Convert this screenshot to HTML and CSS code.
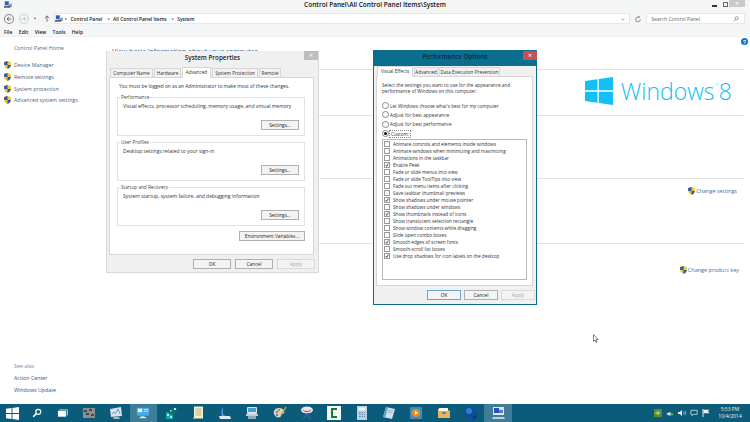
FILE: index.html
```html
<!DOCTYPE html>
<html lang="en">
<head>
<meta charset="utf-8">
<title>System</title>
<link rel="stylesheet" href="styles.css">
</head>
<body>
<svg class="defs" width="0" height="0" aria-hidden="true">
  <symbol id="shield" viewBox="0 0 10 12">
    <path d="M5 0 10 1.5V6c0 3-2.5 5-5 6-2.500-1-5-3-5-6V1.500z" fill="#f3c62e"/>
    <path d="M5 0 0 1.500V6h5zM5 6v6c2.500-1 5-3 5-6z" fill="#2c5aa8"/>
  </symbol>
  <symbol id="tick" viewBox="0 0 6 6">
    <path d="M1 3 2.500 5 5 .8" fill="none" stroke="#222" stroke-width="1.200"/>
  </symbol>
</svg>

<div class="window">
  <header class="titlebar">
    <svg class="app-icon" viewBox="0 0 10 8"><rect x="1" width="5" height="5" fill="#2b62b5"/><rect x="5" y="3" width="5" height="4" fill="#8aa0c8"/><rect y="6" width="8" height="2" fill="#555"/></svg>
    <h1 class="title">Control Panel\All Control Panel Items\System</h1>
    <div class="winctl">
      <span class="min"></span>
      <span class="restore"></span>
      <span class="close">×</span>
    </div>
  </header>
  <nav class="navbar">
    <span class="circle"><svg viewBox="0 0 10 10"><path d="M8 5H2.500M5 2.500 2.500 5 5 7.500" fill="none" stroke="#555" stroke-width="1"/></svg></span>
    <span class="circle dim"><svg viewBox="0 0 10 10"><path d="M2 5h5.500M5 2.500 7.500 5 5 7.500" fill="none" stroke="#bbb" stroke-width="1"/></svg></span>
    <svg class="caret" viewBox="0 0 6 4"><path d="M1 1 3 3 5 1z" fill="#666"/></svg>
    <svg class="up" viewBox="0 0 8 9"><path d="M4 9V1M1 4 4 1l3 3" fill="none" stroke="#555" stroke-width="1"/></svg>
    <div class="address">
      <svg class="crumb-icon" viewBox="0 0 10 8"><rect x="1" width="5" height="5" fill="#2b62b5"/><rect x="5" y="3" width="5" height="4" fill="#8aa0c8"/><rect y="6" width="8" height="2" fill="#555"/></svg>
      <span class="sep">▸</span><span class="crumb">Control Panel</span>
      <span class="sep">▸</span><span class="crumb">All Control Panel Items</span>
      <span class="sep">▸</span><span class="crumb">System</span>
      <svg class="addr-caret" viewBox="0 0 6 4"><path d="M.5.500 3 3 5.500.500" fill="none" stroke="#555" stroke-width=".8"/></svg>
    </div>
    <svg class="refresh" viewBox="0 0 10 10"><path d="M8 5.500A3 3 0 1 1 5 2.500h1.500M5.500 1 7 2.500 5.500 4" fill="none" stroke="#666" stroke-width=".9"/></svg>
    <div class="search"><span>Search Control Panel</span>
      <svg class="lens" viewBox="0 0 8 8"><circle cx="5" cy="3" r="2" fill="none" stroke="#666" stroke-width=".8"/><path d="M3.500 4.500 1 7" stroke="#666" stroke-width=".9"/></svg>
    </div>
  </nav>
  <div class="menubar"><span>File</span><span>Edit</span><span>View</span><span>Tools</span><span>Help</span></div>

  <div class="body">
    <aside class="sidebar">
      <a class="home">Control Panel Home</a>
      <ul class="tasks">
        <li><svg class="shield"><use href="#shield"/></svg>Device Manager</li>
        <li><svg class="shield"><use href="#shield"/></svg>Remote settings</li>
        <li><svg class="shield"><use href="#shield"/></svg>System protection</li>
        <li><svg class="shield"><use href="#shield"/></svg>Advanced system settings</li>
      </ul>
      <div class="seealso">
        <p class="seehead">See also</p>
        <a>Action Center</a>
        <a>Windows Update</a>
      </div>
    </aside>
    <main class="main">
      <svg class="help" viewBox="0 0 10 10"><circle cx="5" cy="5" r="5" fill="#1a6fc4"/><text x="5" y="8" font-size="8" font-weight="700" text-anchor="middle" fill="#fff" font-family="Liberation Sans">?</text></svg>
      <h2 class="heading">View basic information about your computer</h2>
      <section class="sec sec-edition">
        <div class="brand">
          <svg class="flag" viewBox="0 0 28 28"><path d="M0 4 12.500 2.200V13.300H0zM13.800 2 28 0V13.300H13.800zM0 14.700H12.500V25.800L0 24zM13.800 14.700H28V28L13.800 26z" fill="#12c0f6"/></svg>
          <span class="wordmark">Windows<sup>®</sup><span class="eight">8</span></span>
        </div>
      </section>
      <section class="sec sec-system"></section>
      <section class="sec sec-name"><a class="change"><svg class="shield"><use href="#shield"/></svg>Change settings</a></section>
      <section class="sec sec-act"><a class="change"><svg class="shield"><use href="#shield"/></svg>Change product key</a></section>
    </main>
  </div>

  <footer class="taskbar">
    <span class="slot s-start"><svg viewBox="0 0 14 14"><path d="M0 2 6 1.100V6.500H0zM7 1 14 0V6.500H7zM0 7.500H6V12.900L0 12zM7 7.500H14V14L7 13z" fill="#fff"/></svg></span>
    <span class="slot s-search"><svg viewBox="0 0 12 12"><circle cx="7.500" cy="4.500" r="3" fill="none" stroke="#fff" stroke-width="1.500"/><path d="M5.300 6.700 1.500 10.500" stroke="#fff" stroke-width="2"/></svg></span>
    <span class="slot s-tasks"><svg viewBox="0 0 12 12"><rect x="1" y="3" width="9" height="6.500" fill="#fff"/><path d="M2.500 2H11.500V8" fill="none" stroke="#cfe" stroke-width=".8"/></svg></span>
    <span class="slot"><svg viewBox="0 0 14 14"><rect x="1" y="2" width="12" height="10" fill="#8a8f8c"/><path d="M2 4h3v2H2zM7 3h3v2H7zM4 7h3v2H4zM9 8h3v2H9z" fill="#3c4a4c"/></svg></span>
    <span class="slot"><svg viewBox="0 0 14 14"><path d="M1 3 12 1 13 10 2 11z" fill="#d8e2ea"/><path d="M3 8 5 6l1.500 1.500L9 3l2 5" fill="none" stroke="#4a88c0" stroke-width=".8"/><path d="M5 11h5l1 2H4z" fill="#aab4bc"/></svg></span>
    <span class="slot active"><svg viewBox="0 0 16 14"><rect x="1" y="1" width="14" height="9" fill="#49a9ea"/><rect x="2" y="2" width="5" height="4" fill="#e8f4fc"/><path d="M9 3h5M9 5h5" stroke="#d5ecfb"/><path d="M4 13c1-3 6-3 8 0z" fill="#dfe6ea"/></svg></span>
    <span class="slot"><svg viewBox="0 0 14 14"><path d="M2 6h7v7H2z" fill="#18a8a0"/><path d="M4 7 9 2h4v3l-4 4z" fill="#0c6f70"/><path d="M10 2h2v2h-2zM6 4h1.500v1.500H6zM3 8h2v2H3zM6 10h2v2H6z" fill="#9ef0e4"/></svg></span>
    <span class="slot"><svg viewBox="0 0 12 14"><path d="M2 .500H11V12.500H1L2 11z" fill="#f6eec4"/><path d="M3.500 3h6M3.500 5h6M3.500 7h6M3.500 9h6" stroke="#a89c70" stroke-width=".7"/></svg></span>
    <span class="slot"><svg viewBox="0 0 14 14"><path d="M5 1C3 4 3 8 4 11L10 12 5 8z" fill="#5d8fe0"/><path d="M1 10 12 10 13 13H2z" fill="#dfe8f2"/></svg></span>
    <span class="slot"><svg viewBox="0 0 14 14"><rect x="2" y="1" width="10" height="7" rx="1" fill="#dfe8ee"/><rect x="3" y="2" width="8" height="4" fill="#4f9bd6"/><rect x="1" y="8" width="12" height="2" fill="#c2ced6"/><rect x="3" y="10" width="8" height="3" fill="#8fa9b8"/></svg></span>
    <span class="slot"><svg viewBox="0 0 14 14"><path d="M6 2C2 2 0 5 1 8s4 4 6 3 0-2 2-3 3-1 2-3-2-3-5-3z" fill="#d9d3c0"/><circle cx="4" cy="6" r="1" fill="#d33"/><circle cx="6" cy="4" r="1" fill="#3a3"/><circle cx="4" cy="9" r="1" fill="#36c"/><path d="M8 9 13 1" stroke="#e8a030" stroke-width="1.400"/></svg></span>
    <span class="slot"><svg viewBox="0 0 14 14"><ellipse cx="7" cy="4" rx="6" ry="3.500" fill="#e8e8ea"/><path d="M3 4c2 2 6 2 8 0" fill="none" stroke="#c23a4a" stroke-width="1"/><path d="M5 7 11 13M9 7 3 13" stroke="#3b62a8" stroke-width="1.200"/></svg></span>
    <span class="slot"><svg viewBox="0 0 14 14"><rect width="14" height="14" fill="#f4f6f2"/><path d="M10 3H5V11H10" fill="none" stroke="#117a3c" stroke-width="2"/></svg></span>
    <span class="slot"><svg viewBox="0 0 12 14"><rect x="1" width="10" height="14" fill="#b9cfe2"/><rect x="2.500" y="1.500" width="7" height="3" fill="#eef5fb"/><path d="M3 6.500h6M3 8.500h6M3 10.500h6" stroke="#5f8cb0" stroke-dasharray="1.500 1" stroke-width="1.200"/></svg></span>
    <span class="slot"><svg viewBox="0 0 14 14"><path d="M4 1 13 3 10 13 1 11z" fill="#cfe0ea"/><path d="M4 1 1 11 3 11.500 6 1.500z" fill="#5fa0c0"/><path d="M6 4l5 1M5.500 6l5 1" stroke="#8ab" stroke-width=".7"/></svg></span>
    <span class="slot"><svg viewBox="0 0 14 14"><rect x="1" y="1" width="12" height="12" rx="1" fill="#3e8ec6"/><circle cx="7" cy="7" r="4" fill="#f08a1c"/><path d="M6 5 9 7 6 9z" fill="#fff"/></svg></span>
    <span class="slot"><svg viewBox="0 0 14 14"><path d="M1 3H5L6 4.500H13V12H1z" fill="#f0cf80"/><rect x="2" y="2" width="9" height="3" fill="#f6f4ea"/><rect x="1" y="5" width="12" height="7" fill="#e7b45a"/><rect x="5.500" y="6" width="3" height="2" fill="#3d7eae"/></svg></span>
    <span class="slot"><svg viewBox="0 0 14 14"><circle cx="7" cy="7" r="7" fill="#0f4f9a"/><circle cx="5" cy="5" r="3" fill="#2f7fd0"/><path d="M9 10a4 4 0 0 0 4-3 7 7 0 0 1-4 7z" fill="#093a70"/></svg></span>
    <span class="slot active"><svg viewBox="0 0 14 14"><rect x="2" y="1" width="11" height="8" fill="#dfe6ea"/><rect x="3" y="2" width="5" height="5" fill="#2253c8"/><rect x="8" y="4" width="4" height="3" fill="#5a78c0"/><path d="M2 11h11l1 2H1z" fill="#c8d0d6"/></svg></span>
    <div class="tray">
      <svg class="t-green" viewBox="0 0 8 8"><rect width="8" height="8" fill="#5d8a34"/><path d="M1.500 4h3M3.500 2l2 2-2 2" fill="none" stroke="#ddf0b0"/></svg>
      <svg class="t-net" viewBox="0 0 9 8"><path d="M0 5 4 3l4 2-4 2z" fill="#cfd8dc"/><circle cx="6.500" cy="5.500" r="1.500" fill="#5aa83c"/></svg>
      <svg class="t-sound" viewBox="0 0 9 8"><path d="M0 3H2L4.500 .5V7.500L2 5H0z" fill="#eee"/><path d="M6 2.500c1 1 1 2 0 3M7.500 1.500c1.500 1.500 1.500 3.500 0 5" fill="none" stroke="#dde" stroke-width=".7"/></svg>
      <svg class="t-msg" viewBox="0 0 9 8"><path d="M1 1H8V5.500H3.500L2 7V5.500H1z" fill="none" stroke="#eee" stroke-width=".8"/></svg>
      <svg class="t-flag" viewBox="0 0 8 8"><path d="M1 0V8" stroke="#eee"/><path d="M1.500 .8H7.500L6 2.500 7.500 4.200H1.500z" fill="#eee"/></svg>
      <div class="clock"><span>5:53 PM</span><span>10/4/2014</span></div>
    </div>
  </footer>
</div>

<section class="dialog sysprop">
  <header class="dlg-title"><h3>System Properties</h3><span class="dlg-close">×</span></header>
  <div class="tabs">
    <span class="tab w-cn">Computer Name</span>
    <span class="tab w-hw">Hardware</span>
    <span class="tab on w-ad">Advanced</span>
    <span class="tab w-sp">System Protection</span>
    <span class="tab w-rm">Remote</span>
  </div>
  <div class="panel">
    <p class="notice">You must be logged on as an Administrator to make most of these changes.</p>
    <fieldset class="group">
      <legend>Performance</legend>
      <p>Visual effects, processor scheduling, memory usage, and virtual memory</p>
      <button class="btn settings">Settings...</button>
    </fieldset>
    <fieldset class="group">
      <legend>User Profiles</legend>
      <p>Desktop settings related to your sign-in</p>
      <button class="btn settings">Settings...</button>
    </fieldset>
    <fieldset class="group">
      <legend>Startup and Recovery</legend>
      <p>System startup, system failure, and debugging information</p>
      <button class="btn settings">Settings...</button>
    </fieldset>
    <button class="btn env">Environment Variables...</button>
  </div>
  <div class="dlg-actions">
    <button class="btn act">OK</button>
    <button class="btn act">Cancel</button>
    <button class="btn act off">Apply</button>
  </div>
</section>

<section class="dialog perf">
  <header class="dlg-title"><h3>Performance Options</h3><span class="dlg-close">×</span></header>
  <div class="tabs">
    <span class="tab on p-ve">Visual Effects</span>
    <span class="tab p-ad">Advanced</span>
    <span class="tab p-de">Data Execution Prevention</span>
  </div>
  <div class="panel">
    <p class="intro">Select the settings you want to use for the appearance and performance of Windows on this computer.</p>
    <ul class="radios">
      <li><i class="radio"></i>Let Windows choose what's best for my computer</li>
      <li><i class="radio"></i>Adjust for best appearance</li>
      <li><i class="radio"></i>Adjust for best performance</li>
      <li><i class="radio sel"></i><span class="focus">Custom:</span></li>
    </ul>
    <ul class="effects">
      <li><i class="check"></i>Animate controls and elements inside windows</li>
      <li><i class="check"></i>Animate windows when minimizing and maximizing</li>
      <li><i class="check"></i>Animations in the taskbar</li>
      <li><i class="check"><svg><use href="#tick"/></svg></i>Enable Peek</li>
      <li><i class="check"></i>Fade or slide menus into view</li>
      <li><i class="check"></i>Fade or slide ToolTips into view</li>
      <li><i class="check"></i>Fade out menu items after clicking</li>
      <li><i class="check"></i>Save taskbar thumbnail previews</li>
      <li><i class="check"><svg><use href="#tick"/></svg></i>Show shadows under mouse pointer</li>
      <li><i class="check"></i>Show shadows under windows</li>
      <li><i class="check"><svg><use href="#tick"/></svg></i>Show thumbnails instead of icons</li>
      <li><i class="check"></i>Show translucent selection rectangle</li>
      <li><i class="check"></i>Show window contents while dragging</li>
      <li><i class="check"></i>Slide open combo boxes</li>
      <li><i class="check"><svg><use href="#tick"/></svg></i>Smooth edges of screen fonts</li>
      <li><i class="check"></i>Smooth-scroll list boxes</li>
      <li><i class="check"><svg><use href="#tick"/></svg></i>Use drop shadows for icon labels on the desktop</li>
    </ul>
  </div>
  <div class="dlg-actions">
    <button class="btn act def">OK</button>
    <button class="btn act">Cancel</button>
    <button class="btn act off">Apply</button>
  </div>
</section>

<svg class="cursor" viewBox="0 0 6 9"><path d="M.5.500V7.500L2 6l1 2.500 1-.5L3 5.500H5.200z" fill="#fff" stroke="#333" stroke-width=".6"/></svg>
</body>
</html>
```
FILE: styles.css
```css
* { box-sizing: border-box; }
html, body { margin: 0; padding: 0; }
body {
  width: 750px;
  height: 422px;
  overflow: hidden;
  position: relative;
  font-family: "Open Sans", "Liberation Sans", sans-serif;
  font-size: 5px;
  color: #444;
  background: #fff;
}
.defs { position: absolute; }
p, h1, h2, h3, ul { margin: 0; padding: 0; font-weight: 400; }
ul { list-style: none; }
svg { display: block; flex: none; }

.window { display: flex; flex-direction: column; height: 422px; }

.titlebar { height: 13px; background: #f4f5f5; position: relative; display: flex; align-items: flex-start; padding: 1px 0 0 4px; }
.app-icon { width: 8px; height: 7px; }
.title { flex: 1; text-align: center; font-size: 6.500px; font-weight: 600; color: #111; line-height: 8px; margin-left: -12px; }
.winctl { position: absolute; right: 5px; top: 0; display: flex; align-items: flex-start; }
.min { width: 5px; height: 2px; background: #333; margin: 5px 6px 0 0; }
.restore { width: 5px; height: 5px; border: 1px solid #666; margin: 2px 1px 0 0; }
.close { width: 16px; height: 7px; background: #c9c9c9; color: #fff; font-size: 7px; line-height: 7px; text-align: center; }

.navbar { height: 14px; background: #f4f5f5; display: flex; align-items: center; padding: 0 5px 3px 4px; }
.circle { width: 10px; height: 10px; border: 1px solid #888; border-radius: 50%; margin-right: 5px; display: block; }
.circle.dim { border-color: #ccc; margin-right: 3px; }
.caret { width: 4px; height: 3px; margin: 0 7px 0 1px; }
.up { width: 6px; height: 7px; margin-right: 4px; }
.address { width: 578px; height: 11px; background: #fff; border: 1px solid #e8e8e8; display: flex; align-items: center; padding-left: 0; position: relative; font-weight: 600; color: #222; font-size: 4.900px; }
.crumb-icon { width: 8px; height: 7px; margin-right: 1px; }
.sep { font-size: 4px; color: #666; margin: 0 3px 0 1.500px; font-weight: 400; }
.sep + .crumb { margin-right: 4px; }
.addr-caret { width: 4px; height: 3px; position: absolute; right: 4px; top: 4px; }
.refresh { width: 8px; height: 8px; margin: 0 4px; }
.search { width: 99px; height: 11px; background: #fff; border: 1px solid #e8e8e8; display: flex; justify-content: space-between; align-items: center; padding: 0 5px 0 4px; font-size: 5px; color: #666; }
.lens { width: 6px; height: 6px; }

.menubar { height: 10px; background: #f5f6f7; display: flex; gap: 6.500px; align-items: center; padding-left: 4px; font-weight: 600; font-size: 5px; color: #222; border-bottom: 1px solid #f0f0f0; }

.body { flex: 1; display: flex; background: #fff; min-height: 0; }
.sidebar { width: 107px; padding: 7px 0 0 14px; display: flex; flex-direction: column; color: #55606a; font-size: 5.300px; }
.home { line-height: 8px; color: #5a6a80; }
.tasks { margin-top: 9px; margin-left: -10px; display: flex; flex-direction: column; gap: 3.800px; }
.tasks li { display: flex; align-items: center; gap: 3px; height: 8px; color: #4a5f80; }
.shield { width: 7px; height: 8px; }
.seealso { margin-top: auto; padding-bottom: 10px; display: flex; flex-direction: column; gap: 4px; line-height: 8px; color: #33508a; }
.seehead { color: #888; }

.main { flex: 1; position: relative; padding-right: 6px; display: flex; flex-direction: column; }
.help { position: absolute; right: 2px; top: 1px; width: 7px; height: 7px; }
.heading { padding: 10px 0 0 5px; font-size: 7px; color: #2a6a9a; line-height: 10px; height: 32px; }
.sec { border-top: 1px solid #e2e2e2; position: relative; }
.sec-edition { height: 46px; }
.sec-system { height: 63px; }
.sec-name { height: 65px; }
.sec-act { flex: 1; }
.brand { display: flex; align-items: center; justify-content: flex-end; gap: 8px; padding: 7px 12px 0 0; color: #12bdf3; }
.flag { width: 28px; height: 28px; }
.wordmark { font-size: 23px; font-weight: 300; line-height: 28px; white-space: nowrap; display: flex; align-items: flex-start; }
.wordmark sup { font-size: 4px; line-height: 16px; margin: 0 0 0 1px; }
.change { display: flex; align-items: center; justify-content: flex-end; gap: 1px; color: #3c6ea8; font-size: 5.500px; padding-right: 7px; }
.sec-name .change { padding-top: 8px; }
.sec-act .change { padding-top: 22px; padding-right: 5px; }

.taskbar { height: 18px; background: #0a5c7a; display: flex; align-items: center; }
.slot { width: 27.300px; height: 18px; display: flex; align-items: center; justify-content: center; }
.slot svg { width: 14px; height: 14px; }
.slot.active { background: #3f7d96; }
.s-start { width: 24px; }
.s-start svg { width: 13px; height: 13px; }
.s-search { width: 26px; }
.s-search svg { width: 10px; height: 10px; }
.s-tasks { width: 25px; }
.s-tasks svg { width: 11px; height: 11px; }
.tray { margin-left: auto; display: flex; align-items: center; padding-right: 7px; color: #f0f0f0; }
.tray svg { width: 8px; height: 8px; margin-right: 4px; }
.clock { display: flex; flex-direction: column; align-items: center; font-size: 5px; line-height: 7.500px; width: 26px; margin-left: 3px; }

.dialog { position: absolute; display: flex; flex-direction: column; }
.sysprop { left: 106px; top: 51px; width: 213px; height: 222px; background: #f0f0f0; border: 1px solid #d8d8d8; border-top: 0; }
.perf { left: 373px; top: 50px; width: 164px; height: 255px; background: #f0f0f0; border: 1px solid #0b6e8f; border-top: 0; }
.dlg-title { height: 16px; position: relative; display: flex; justify-content: center; align-items: center; }
.dlg-title h3 { font-size: 6.300px; font-weight: 600; color: #222; line-height: 9px; padding-bottom: 4px; }
.dlg-close { position: absolute; right: 0; top: 0; width: 14px; height: 9px; background: #bdbdbd; color: #fff; font-size: 7px; line-height: 9px; text-align: center; }
.sysprop .dlg-title { background: #f0f0f0; }
.perf .dlg-title { background: #0b6e8f; margin: 0 -1px; }
.perf .dlg-title h3 { color: #0d2c3a; }
.perf .dlg-close { background: #c75050; top: 1px; right: 0; }

.tabs { display: flex; height: 10px; padding-left: 3px; gap: 1px; align-items: flex-end; position: relative; z-index: 1; }
.tab { height: 9px; border: 1px solid #d6d6d6; border-bottom: 0; background: #f2f2f2; text-align: center; line-height: 8px; font-size: 4.700px; color: #333; white-space: nowrap; }
.tab.on { height: 11px; background: #fff; margin-bottom: -1px; line-height: 9px; }
.w-cn { width: 43px; }
.w-hw { width: 27px; }
.w-ad { width: 29px; }
.w-sp { width: 46px; }
.w-rm { width: 22px; }
.p-ve { width: 36px; }
.p-ad { width: 24px; }
.p-de { width: 61px; }

.panel { background: #fff; border: 1px solid #d6d6d6; position: relative; display: flex; flex-direction: column; }
.sysprop .panel { margin: 0 4px 0 2px; height: 178px; padding: 5px 8px 0 7px; }
.perf .panel { margin: 0 3px 0 2px; height: 210px; padding: 5px 5px 0 5px; }
.notice { font-size: 4.850px; line-height: 7px; color: #333; padding-left: 2px; white-space: nowrap; }

.group { border: 1px solid #e2e2e2; margin: 3px 0 0; padding: 0; min-width: 0; height: 42px; }
.notice + .group { margin-top: 4px; }
.group legend { font-size: 4.700px; line-height: 6px; padding: 0 1px; margin-left: 2px; color: #444; }
.group p { font-size: 5px; line-height: 7px; color: #333; padding: 3px 0 0 5px; box-sizing: content-box; white-space: nowrap; }
.btn { font-family: inherit; font-size: 4.800px; color: #222; background: #f3f3f3; border: 1px solid #b0b0b0; padding: 0; height: 10px; line-height: 8px; border-radius: 0; }
.settings { width: 38px; display: block; margin: 10px 5px 0 auto; }
.env { width: 66px; margin: 5px 0 0 auto; display: block; }

.dlg-actions { display: flex; justify-content: flex-end; gap: 4px; padding: 4px 3px 0 0; }
.act { width: 38px; }
.off { color: #aaa; border-color: #dadada; }
.perf .dlg-actions { gap: 3px; padding: 4px 1px 0 0; }
.perf .act { width: 34px; }
.perf .def { border-color: #6aa6d6; }

.intro { font-size: 4.700px; line-height: 6px; color: #333; width: 146px; }
.radios { margin-top: 8px; display: flex; flex-direction: column; gap: 2.400px; font-size: 4.700px; }
.radios li { display: flex; align-items: center; gap: 1px; height: 7px; color: #333; }
.radio { width: 7px; height: 7px; border: 1px solid #888; border-radius: 50%; background: #fff; position: relative; display: block; }
.radio.sel::after { content: ""; position: absolute; left: 1px; top: 1px; width: 3px; height: 3px; border-radius: 50%; background: #111; }
.focus { outline: 1px dotted #888; padding: 0 1px; }
.effects { border: 1px solid #b8b8b8; margin: 2px 0 0; height: 141px; padding: 0 0 0 1px; font-size: 4.700px; color: #333; }
.effects li { height: 7px; display: flex; align-items: center; gap: 3px; white-space: nowrap; }
.check { width: 6px; height: 6px; border: 1px solid #999; background: #fff; display: block; }
.check svg { width: 4px; height: 4px; }

.cursor { position: absolute; left: 593px; top: 334px; width: 6px; height: 9px; }
```
